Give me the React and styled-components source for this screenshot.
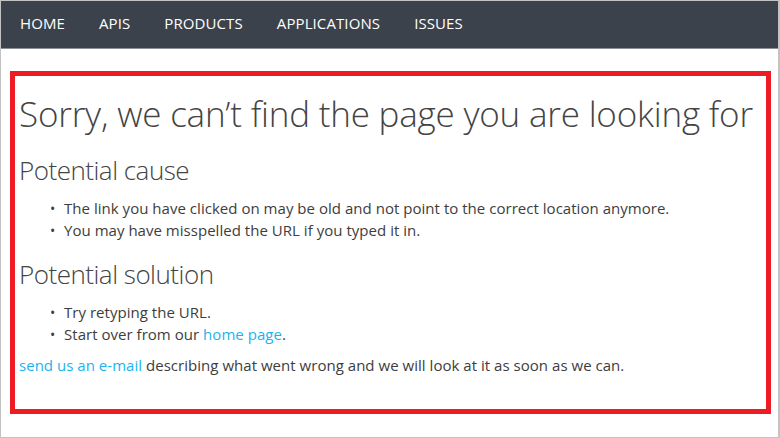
import React from 'react';
import styled, { createGlobalStyle } from 'styled-components';

const Global = createGlobalStyle`
  html, body {
    margin: 0;
    padding: 0;
    background: #ffffff;
  }
  * {
    box-sizing: border-box;
  }
`;

const Frame = styled.div`
  width: 780px;
  height: 438px;
  border: 1px solid #c3c3c3;
  border-right-width: 2px;
  background: #ffffff;
  font-family: 'Open Sans', 'Liberation Sans', sans-serif;
  color: #3d3d3d;
  display: flex;
  flex-direction: column;
  overflow: hidden;
`;

const Nav = styled.nav`
  height: 48px;
  background: #3c424b;
  border-bottom: 1px solid #8a8f96;
  display: flex;
  align-items: center;
  gap: 34px;
  padding: 0 0 3px 19px;
`;

const NavLink = styled.a`
  color: #ffffff;
  font-size: 15px;
  letter-spacing: 0.1px;
  text-decoration: none;
`;

const Main = styled.main`
  padding: 22px 7px 0 9px;
`;

const Highlight = styled.section`
  height: 343px;
  border: 5px solid #ed1c24;
  padding: 15px 4px 0 4px;
`;

const Title = styled.h1`
  margin: 0;
  font-size: 35px;
  font-weight: 300;
  line-height: 46px;
  letter-spacing: -0.2px;
  color: #444444;
`;

const SubTitle = styled.h2`
  margin: 16px 0 0;
  font-size: 26px;
  font-weight: 300;
  line-height: 34px;
  letter-spacing: -0.5px;
  color: #444444;
`;

const List = styled.ul`
  margin: 10px 0 ${p => p.$last ? '10px' : '12px'};
  padding: 0 0 0 45px;
  list-style: none;
`;

const Item = styled.li`
  position: relative;
  font-size: 15px;
  line-height: 22px;
  letter-spacing: 0.03px;
  &::before {
    content: '•';
    position: absolute;
    left: -14px;
    top: 1px;
    font-size: 14px;
    line-height: 22px;
  }
`;

const Text = styled.p`
  margin: 0;
  font-size: 15px;
  line-height: 21px;
  letter-spacing: 0.03px;
`;

const Link = styled.a`
  color: #1ab4ee;
  text-decoration: none;
`;

export default function App() {
  const nav = ['HOME', 'APIS', 'PRODUCTS', 'APPLICATIONS', 'ISSUES'];
  return (
    <>
      <Global />
      <Frame>
        <Nav>
          {nav.map(n => (
            <NavLink key={n} href="#">{n}</NavLink>
          ))}
        </Nav>
        <Main>
          <Highlight>
            <Title>Sorry, we can’t find the page you are looking for</Title>
            <SubTitle>Potential cause</SubTitle>
            <List>
              <Item>The link you have clicked on may be old and not point to the correct location anymore.</Item>
              <Item>You may have misspelled the URL if you typed it in.</Item>
            </List>
            <SubTitle>Potential solution</SubTitle>
            <List $last>
              <Item>Try retyping the URL.</Item>
              <Item>Start over from our <Link href="#">home page</Link>.</Item>
            </List>
            <Text>
              <Link href="#">send us an e-mail</Link> describing what went wrong and we will look at it as soon as we can.
            </Text>
          </Highlight>
        </Main>
      </Frame>
    </>
  );
}
